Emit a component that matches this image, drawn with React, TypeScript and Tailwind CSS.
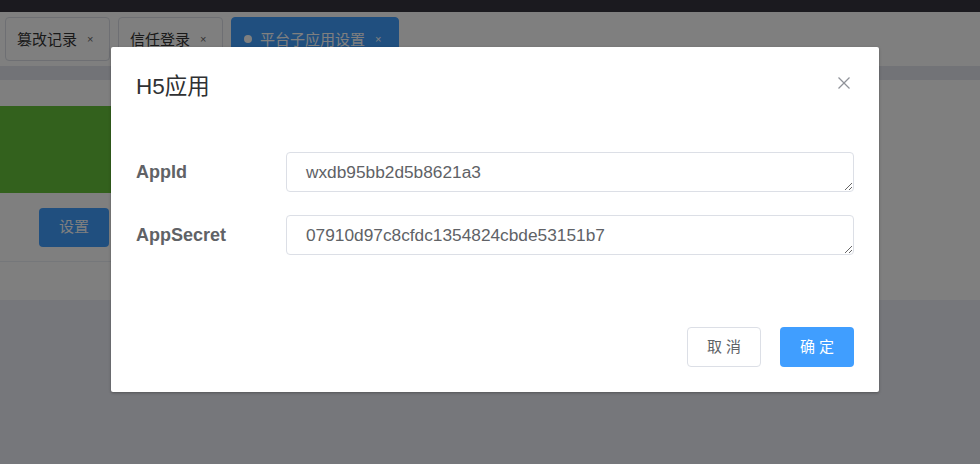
import React from "react";

const cjk = "font-['Liberation_Sans','Noto_Sans_CJK_SC',sans-serif]";

function Tab({ label, active, width }: { label: string; active?: boolean; width: string }) {
  return (
    <div
      className={`${width} h-[44px] flex items-center rounded-[4px] border ${
        active ? "bg-[#409eff] border-[#409eff] text-white pl-[12px]" : "bg-white border-[#dcdfe6] text-[#333] pl-[11px]"
      }`}
    >
      {active && <span className="w-[8px] h-[8px] rounded-full bg-white mr-[8px]" />}
      <span className="text-[15px] leading-none">{label}</span>
      <span className={`ml-[10px] text-[11px] leading-none ${active ? "text-white" : "text-[#666]"}`}>×</span>
    </div>
  );
}

function Field({ label, value }: { label: string; value: string }) {
  return (
    <div className="flex items-center h-[40px]">
      <label className="w-[150px] text-[18px] font-bold text-[#606266] font-['Liberation_Sans',sans-serif]">
        {label}
      </label>
      <textarea
        rows={1}
        readOnly
        value={value}
        className="flex-1 h-[40px] border border-[#dcdfe6] rounded-[4px] pl-[19px] py-[7px] text-[17.3px] leading-[24px] text-[#606266] font-['Liberation_Sans',sans-serif] outline-none"
      />
    </div>
  );
}

export default function App() {
  return (
    <div className={`relative w-[980px] h-[464px] overflow-hidden bg-[#eceef6] ${cjk}`}>
      {/* page underneath */}
      <div className="h-[12px] bg-[#36343f]" />
      <div className="h-[54px] bg-white flex items-start pt-[5px] pl-[5px] gap-2">
        <Tab label="篡改记录" width="w-[105px]" />
        <Tab label="信任登录" width="w-[105px]" />
        <Tab label="平台子应用设置" width="w-[168px]" active />
      </div>
      <div className="h-[14px] bg-[#e4e6ee]" />
      <div className="h-[220px] bg-white pt-[26px]">
        <div className="w-[700px] h-[87px] bg-[#67c23a]" />
        <div className="ml-[39px] mt-[15px] w-[70px] h-[39px] rounded-[4px] bg-[#409eff] text-white text-[15px] flex items-center justify-center">
          设置
        </div>
        <div className="mt-[14px] w-[800px] border-t border-[#ebeef5]" />
      </div>

      {/* mask + dialog */}
      <div className="absolute inset-0 bg-black/50 pt-[47px] pl-[111px]">
        <div className="relative w-[768px] h-[345px] bg-white rounded-[2px] shadow-[0_1px_3px_rgba(0,0,0,0.3)] px-[25px] flex flex-col">
          <div className="pt-[25px] text-[22.5px] leading-[30px] text-[#303133]">H5应用</div>
          <button className="absolute top-[30px] right-[29px] w-[12px] h-[12px]">
            <svg viewBox="0 0 12 12" className="w-[12px] h-[12px]" stroke="#909399" strokeWidth="1.3">
              <line x1="0.5" y1="0.5" x2="11.5" y2="11.5" />
              <line x1="11.5" y1="0.5" x2="0.5" y2="11.5" />
            </svg>
          </button>
          <div className="pt-[50px] flex flex-col gap-[23px]">
            <Field label="AppId" value="wxdb95bb2d5b8621a3" />
            <Field label="AppSecret" value="07910d97c8cfdc1354824cbde53151b7" />
          </div>
          <div className="mt-[72px] flex justify-end gap-[19px]">
            <button className="w-[74px] h-[40px] border border-[#dcdfe6] rounded-[4px] bg-white text-[15px] text-[#606266]">
              取 消
            </button>
            <button className="w-[74px] h-[40px] rounded-[4px] bg-[#409eff] text-[15px] text-white">
              确 定
            </button>
          </div>
        </div>
      </div>
    </div>
  );
}
